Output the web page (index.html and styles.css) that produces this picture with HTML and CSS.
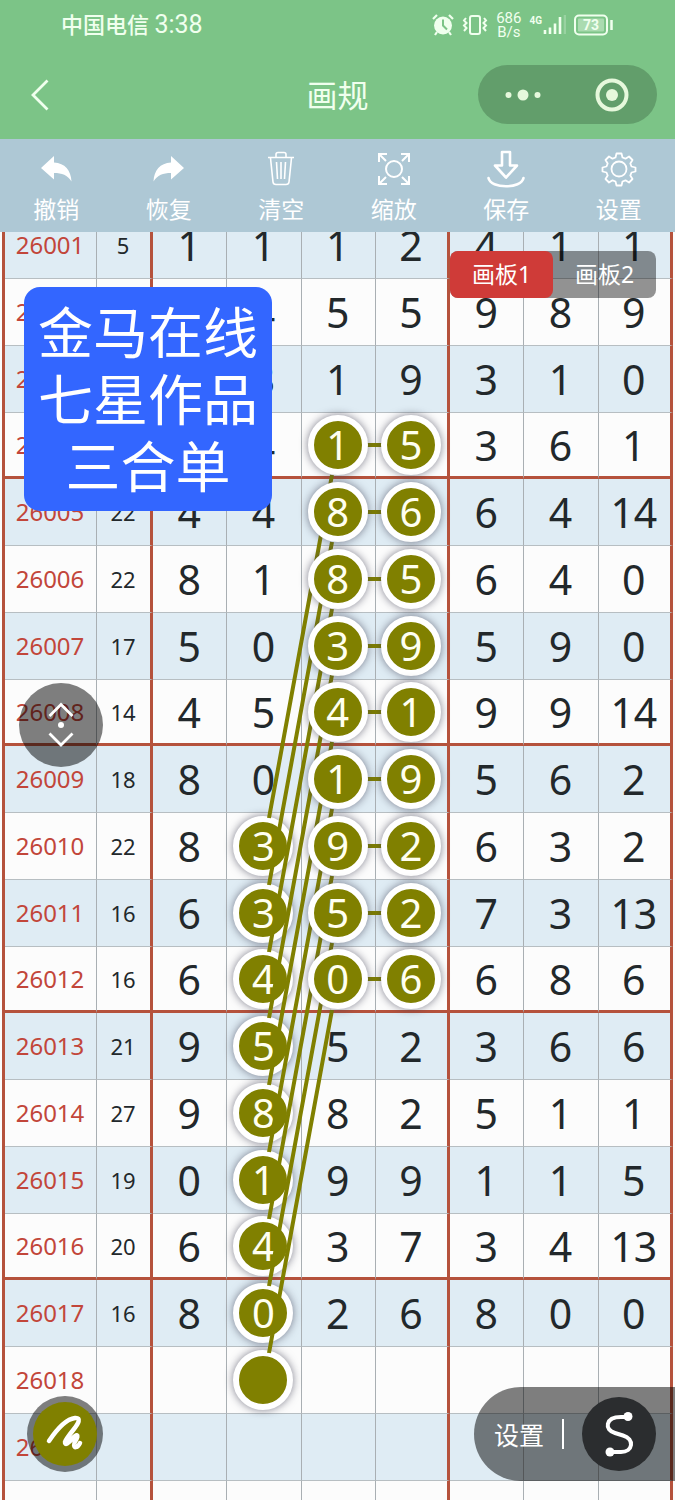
FILE: index.html
```html
<!DOCTYPE html>
<html lang="zh-CN">
<head>
<meta charset="utf-8">
<meta name="viewport" content="width=device-width, initial-scale=1">
<title>画规</title>
<link rel="stylesheet" href="styles.css">
</head>
<body>
<div class="app">
  <header class="header">
    <div class="status">
      <span class="carrier">中国电信 <span class="time">3:38</span></span>
      <div class="status-icons">
        <svg width="22" height="22" viewBox="0 0 22 22"><circle cx="11" cy="11.500" r="9" fill="currentColor"/><path d="M1 5 5 1M21 5l-4-4M5 18l-2 3M17 18l2 3" stroke="currentColor" stroke-width="2.2" fill="none"/><path d="M11 5.500v6l4 4" stroke="#7cc487" stroke-width="2" fill="none"/></svg>
        <svg width="26" height="22" viewBox="0 0 26 22" fill="none" stroke="currentColor" stroke-width="2"><rect x="8" y="2" width="10" height="18" rx="2"/><path d="M4 4 2 6.500 4.500 9 2 11.500 4.500 14 2 17M22 4l2 2.500L21.500 9l2.500 2.500-2.500 2.500 2.500 3"/></svg>
        <span class="speed"><span>686</span><span>B/s</span></span>
        <span class="signal"><span class="net">4G</span>
          <svg width="24" height="20" viewBox="0 0 24 20" stroke="currentColor" stroke-width="2.600"><path d="M3 15v4M8 12.500V19M13 8.500V19M18 2v17"/><path d="M23 0v19" opacity=".25"/></svg></span>
        <svg width="40" height="22" viewBox="0 0 40 22" class="battery"><rect x="1" y="1.500" width="32" height="19" rx="4" fill="none" stroke="currentColor" stroke-width="2"/><rect x="4" y="4.500" width="26" height="13" rx="1" fill="currentColor" opacity=".4"/><path d="M37.500 6v10" stroke="currentColor" stroke-width="2.500"/><text x="17" y="16" text-anchor="middle" fill="currentColor">73</text></svg>
      </div>
    </div>
    <div class="titlebar">
      <button class="back" aria-label="返回"><svg width="18" height="32" viewBox="0 0 18 32" fill="none" stroke="currentColor" stroke-width="2.800"><path d="M16.500 1.500 2 16l14.500 14.500"/></svg></button>
      <h1 class="title">画规</h1>
      <div class="capsule">
        <button aria-label="更多"><svg width="38" height="12" viewBox="0 0 38 12" fill="currentColor"><circle cx="4.500" cy="6" r="3"/><circle cx="19" cy="6" r="5.500"/><circle cx="33.500" cy="6" r="3"/></svg></button>
        <button aria-label="关闭"><svg width="34" height="34" viewBox="0 0 34 34"><circle cx="17" cy="17" r="14.500" fill="none" stroke="currentColor" stroke-width="4"/><circle cx="17" cy="17" r="6" fill="currentColor"/></svg></button>
      </div>
    </div>
  </header>

  <nav class="toolbar">
    <button><svg width="38" height="38" viewBox="0 0 38 38" fill="currentColor"><path d="M4 18 17 6v6.500c11 .5 17 8 17.500 19C30.500 25 25 23 17 23v6.500z"/></svg>撤销</button>
    <button><svg width="38" height="38" viewBox="0 0 38 38" fill="currentColor"><path d="M34 18 21 6v6.500C10 13 4 20.500 3.500 31.500 7.500 25 13 23 21 23v6.500z"/></svg>恢复</button>
    <button><svg width="38" height="38" viewBox="0 0 38 38" fill="none" stroke="currentColor" stroke-width="1.600"><path d="M6 7.500h26M14 7V4.500q0-2 2-2h6q2 0 2 2V7M8.500 8l2.500 24q.3 2.500 3 2.500h10q2.700 0 3-2.500L29.500 8M14.500 12l1 17M19 12v17M23.500 12l-1 17"/></svg>清空</button>
    <button><svg width="38" height="38" viewBox="0 0 38 38" fill="none" stroke="currentColor" stroke-width="2"><circle cx="19" cy="19" r="8"/><path d="M4 12V4h8M26 4h8v8M34 26v8h-8M12 34H4v-8M4 4l7 7M34 4l-7 7M34 34l-7-7M4 34l7-7"/></svg>缩放</button>
    <button><svg width="38" height="38" viewBox="0 0 38 38" fill="none" stroke="currentColor" stroke-width="2.600" stroke-linejoin="round" stroke-linecap="round"><path d="M15 2h8v13.500h7L19 27.500 8 15.500h7zM1.500 28c2 11 33 11 35 0"/></svg>保存</button>
    <button><svg width="38" height="38" viewBox="0 0 38 38" fill="none" stroke="currentColor" stroke-width="1.800" stroke-linejoin="round"><circle cx="19" cy="19" r="7.500"/><path d="M16.500 3.500h5l1 4 3 1.200 3.500-2.200 3.500 3.500-2.200 3.500 1.200 3 4 1v4l-4 1-1.200 3 2.200 3.500-3.500 3.500-3.500-2.200-3 1.200-1 4h-5l-1-4-3-1.200L9 32.500 5.500 29l2.200-3.500-1.200-3-4-1v-4l4-1 1.200-3L5.500 10 9 6.500l3.500 2.200 3-1.200z"/></svg>设置</button>
  </nav>

  <main class="board">
    <table class="chart">
      <colgroup><col class="c-issue"><col class="c-sum"><col><col><col><col><col><col><col></colgroup>
      <tbody>
        <tr><th scope="row">26001</th><td>5</td><td>1</td><td>1</td><td>1</td><td>2</td><td>4</td><td>1</td><td>1</td></tr>
        <tr><th scope="row">26002</th><td></td><td></td><td>4</td><td>5</td><td>5</td><td>9</td><td>8</td><td>9</td></tr>
        <tr><th scope="row">26003</th><td></td><td></td><td>3</td><td>1</td><td>9</td><td>3</td><td>1</td><td>0</td></tr>
        <tr><th scope="row">26004</th><td></td><td></td><td>4</td><td><span class="ball front">1</span></td><td><span class="ball front">5</span></td><td>3</td><td>6</td><td>1</td></tr>
      </tbody>
      <tbody>
        <tr><th scope="row">26005</th><td>22</td><td>4</td><td>4</td><td><span class="ball front">8</span></td><td><span class="ball front">6</span></td><td>6</td><td>4</td><td>14</td></tr>
        <tr><th scope="row">26006</th><td>22</td><td>8</td><td>1</td><td><span class="ball front">8</span></td><td><span class="ball front">5</span></td><td>6</td><td>4</td><td>0</td></tr>
        <tr><th scope="row">26007</th><td>17</td><td>5</td><td>0</td><td><span class="ball front">3</span></td><td><span class="ball front">9</span></td><td>5</td><td>9</td><td>0</td></tr>
        <tr><th scope="row">26008</th><td>14</td><td>4</td><td>5</td><td><span class="ball front">4</span></td><td><span class="ball front">1</span></td><td>9</td><td>9</td><td>14</td></tr>
      </tbody>
      <tbody>
        <tr><th scope="row">26009</th><td>18</td><td>8</td><td>0</td><td><span class="ball front">1</span></td><td><span class="ball front">9</span></td><td>5</td><td>6</td><td>2</td></tr>
        <tr><th scope="row">26010</th><td>22</td><td>8</td><td><span class="ball">3</span></td><td><span class="ball front">9</span></td><td><span class="ball front">2</span></td><td>6</td><td>3</td><td>2</td></tr>
        <tr><th scope="row">26011</th><td>16</td><td>6</td><td><span class="ball">3</span></td><td><span class="ball front">5</span></td><td><span class="ball front">2</span></td><td>7</td><td>3</td><td>13</td></tr>
        <tr><th scope="row">26012</th><td>16</td><td>6</td><td><span class="ball">4</span></td><td><span class="ball front">0</span></td><td><span class="ball front">6</span></td><td>6</td><td>8</td><td>6</td></tr>
      </tbody>
      <tbody>
        <tr><th scope="row">26013</th><td>21</td><td>9</td><td><span class="ball">5</span></td><td>5</td><td>2</td><td>3</td><td>6</td><td>6</td></tr>
        <tr><th scope="row">26014</th><td>27</td><td>9</td><td><span class="ball">8</span></td><td>8</td><td>2</td><td>5</td><td>1</td><td>1</td></tr>
        <tr><th scope="row">26015</th><td>19</td><td>0</td><td><span class="ball">1</span></td><td>9</td><td>9</td><td>1</td><td>1</td><td>5</td></tr>
        <tr><th scope="row">26016</th><td>20</td><td>6</td><td><span class="ball">4</span></td><td>3</td><td>7</td><td>3</td><td>4</td><td>13</td></tr>
      </tbody>
      <tbody>
        <tr><th scope="row">26017</th><td>16</td><td>8</td><td><span class="ball">0</span></td><td>2</td><td>6</td><td>8</td><td>0</td><td>0</td></tr>
        <tr><th scope="row">26018</th><td></td><td></td><td><span class="ball"></span></td><td></td><td></td><td></td><td></td><td></td></tr>
        <tr><th scope="row">26019</th><td></td><td></td><td></td><td></td><td></td><td></td><td></td><td></td></tr>
        <tr><th scope="row"></th><td></td><td></td><td></td><td></td><td></td><td></td><td></td><td></td></tr>
      </tbody>
    </table>

    <svg class="links" viewBox="0 232 675 1268" preserveAspectRatio="none" aria-hidden="true">
      <path d="M332 475 269 818M332 542 269 885M332 609 269 952M332 675 269 1018M332 742 269 1085M332 809 269 1152M332 876 269 1219M332 943 269 1286M332 1010 269 1353"/>
      <path d="M366 445h18M366 512h18M366 579h18M366 646h18M366 712h18M366 779h18M366 846h18M366 913h18M366 979h18"/>
    </svg>

    <div class="note">金马在线<br>七星作品<br>三合单</div>

    <div class="tabs">
      <button class="tab active">画板1</button>
      <button class="tab">画板2</button>
    </div>

    <button class="knob" aria-label="上下滚动"><svg width="28" height="46" viewBox="0 0 28 46" fill="none" stroke="currentColor" stroke-width="2.800"><path d="M2.500 14 14 2.500 25.500 14M2.500 31.500 14 43l11.500-11.500"/><circle cx="14" cy="23" r="3" fill="currentColor" stroke="none"/></svg></button>

    <button class="pen" aria-label="画笔"><svg width="64" height="64" viewBox="0 0 64 64" fill="none" stroke="currentColor" stroke-width="4.500" stroke-linecap="round" stroke-linejoin="round"><path d="M16 39C24 27 34 17 42 16c7-.5 3 6-1 11s-8 10-9 13c-.5 4 4 1 7-3 5-6 7-4 4 1-3 4-2 8 0 7 2 0 3-2 4-4"/></svg></button>

    <div class="dock">
      <button class="dock-set">设置</button>
      <span class="divider"></span>
      <button class="curve" aria-label="曲线"><svg width="74" height="74" viewBox="0 0 74 74" fill="none" stroke="currentColor" stroke-width="4"><path d="M46 20h-7C23 20 22 33 33 36l8 2.500C53 42 51 55 39 55H28"/><circle cx="46" cy="19.500" r="4.500" fill="currentColor" stroke="none"/><circle cx="28" cy="55" r="4.500" fill="currentColor" stroke="none"/></svg></button>
    </div>
  </main>
</div>
</body>
</html>
```
FILE: styles.css
```css
* { box-sizing: border-box; }

body {
  margin: 0;
  font-family: "Noto Sans", "Noto Sans CJK SC", sans-serif;
}

button {
  margin: 0;
  padding: 0;
  border: 0;
  background: none;
  color: inherit;
  font: inherit;
}

svg { display: block; }

.app {
  display: flex;
  flex-direction: column;
  height: 100vh;
  overflow: hidden;
}

/* header */
.header {
  flex: none;
  background: #7cc487;
  color: #f0ffee;
}

.status {
  display: flex;
  align-items: center;
  justify-content: space-between;
  height: 50px;
  padding: 0 61px;
}

.carrier {
  font-family: Roboto, "Noto Sans CJK SC", sans-serif;
  font-size: 22px;
  font-weight: 500;
  line-height: 30px;
}

.time { font-size: 25px; font-weight: 400; }

.status-icons {
  display: flex;
  align-items: center;
  gap: 8px;
}

.speed {
  display: flex;
  flex-direction: column;
  align-items: center;
  font: 400 15px/14px Roboto, sans-serif;
}

.signal { display: flex; align-items: flex-start; }

.net { font: 700 10px/12px Roboto, sans-serif; }

.battery text { font: 700 14px Roboto, sans-serif; }

.titlebar {
  display: grid;
  grid-template-columns: 1fr auto 1fr;
  align-items: center;
  height: 89px;
  padding: 0 18px;
}

.back {
  justify-self: start;
  padding: 0 13px;
}

.title {
  margin: 0;
  font-size: 31px;
  font-weight: 400;
  line-height: 40px;
}

.capsule {
  justify-self: end;
  display: flex;
  width: 179px;
  height: 59px;
  border-radius: 30px;
  background: #629e6b;
  color: #e6f8dc;
}

.capsule button {
  flex: 1;
  display: grid;
  place-items: center;
}

/* toolbar */
.toolbar {
  flex: none;
  display: grid;
  grid-template-columns: repeat(6, 1fr);
  height: 93px;
  background: #aec8d5;
  color: #fff;
}

.toolbar button {
  display: flex;
  flex-direction: column;
  align-items: center;
  gap: 6px;
  padding-top: 11px;
  font-size: 23px;
  line-height: 30px;
}

/* number chart */
.board {
  position: relative;
  flex: 1;
  min-height: 0;
  overflow: hidden;
  background: #fcfcfc;
}

.chart {
  width: calc(100% - 4px);
  margin: -20px 2px 0;
  table-layout: fixed;
  border-collapse: separate;
  border-spacing: 0;
  border-left: 3px solid #b5523c;
  color: #22282b;
}

.c-issue { width: 92px; }
.c-sum { width: 56px; }

.chart th,
.chart td {
  height: 67px;
  padding: 0 1px 0 0;
  border-right: 1px solid #a9afb3;
  border-bottom: 1px solid #b7bec2;
  text-align: center;
  vertical-align: middle;
  font-size: 41px;
  font-weight: 400;
  line-height: 60px;
}

.chart tr:nth-child(odd) { background: #dfecf4; }

.chart th {
  color: #c2463a;
  font-size: 24px;
}

.chart td:nth-child(2) { font-size: 22px; }

.chart td:nth-child(2),
.chart td:nth-child(6),
.chart td:nth-child(9) { border-right: 3px solid #b5523c; }

.chart tr:last-child > * {
  height: 66px;
  border-bottom: 3px solid #b5523c;
}

.ball {
  display: block;
  position: relative;
  width: 60px;
  height: 60px;
  margin: 0 auto;
  border: 6px solid #fff;
  border-radius: 50%;
  background: #808000;
  box-shadow: 0 0 9px rgba(60, 60, 80, .65);
  color: #fffff0;
  font-size: 40px;
  line-height: 48px;
}

.front { z-index: 2; }

.links {
  position: absolute;
  z-index: 1;
  top: 0;
  left: 0;
  width: 100%;
  height: 1268px;
  fill: none;
  stroke: #808000;
  stroke-width: 4px;
  pointer-events: none;
}

/* floating tools */
.note,
.tabs,
.knob,
.pen,
.dock {
  position: absolute;
  z-index: 3;
  color: #fff;
}

.note {
  top: 55px;
  left: 24px;
  padding: 11px 14px 12px;
  border-radius: 16px;
  background: #3366ff;
  font-size: 55px;
  line-height: 67px;
  text-align: center;
}

.tabs {
  top: 19px;
  right: 19px;
  display: flex;
  border-radius: 8px;
  background: rgba(0, 0, 0, .42);
}

.tab {
  width: 103px;
  height: 47px;
  padding-bottom: 3px;
  border-radius: 8px;
  font-size: 23px;
}

.tab.active { background: #cf3b38; }

.knob {
  top: 451px;
  left: 19px;
  display: grid;
  place-items: center;
  width: 84px;
  height: 84px;
  border-radius: 50%;
  background: rgba(0, 0, 0, .5);
}

.pen {
  left: 27px;
  bottom: 28px;
  padding: 6px;
  border-radius: 50%;
  background: rgba(0, 0, 0, .5);
}

.pen svg {
  border-radius: 50%;
  background: #808000;
}

.dock {
  right: 0;
  bottom: 19px;
  display: flex;
  align-items: center;
  gap: 18px;
  height: 94px;
  padding: 0 19px 0 20px;
  border-radius: 47px 0 0 47px;
  background: rgba(0, 0, 0, .5);
}

.dock-set { font-size: 25px; }

.divider {
  width: 2px;
  height: 30px;
  background: #fff;
}

.curve {
  border-radius: 50%;
  background: #2b2d2f;
}
```
